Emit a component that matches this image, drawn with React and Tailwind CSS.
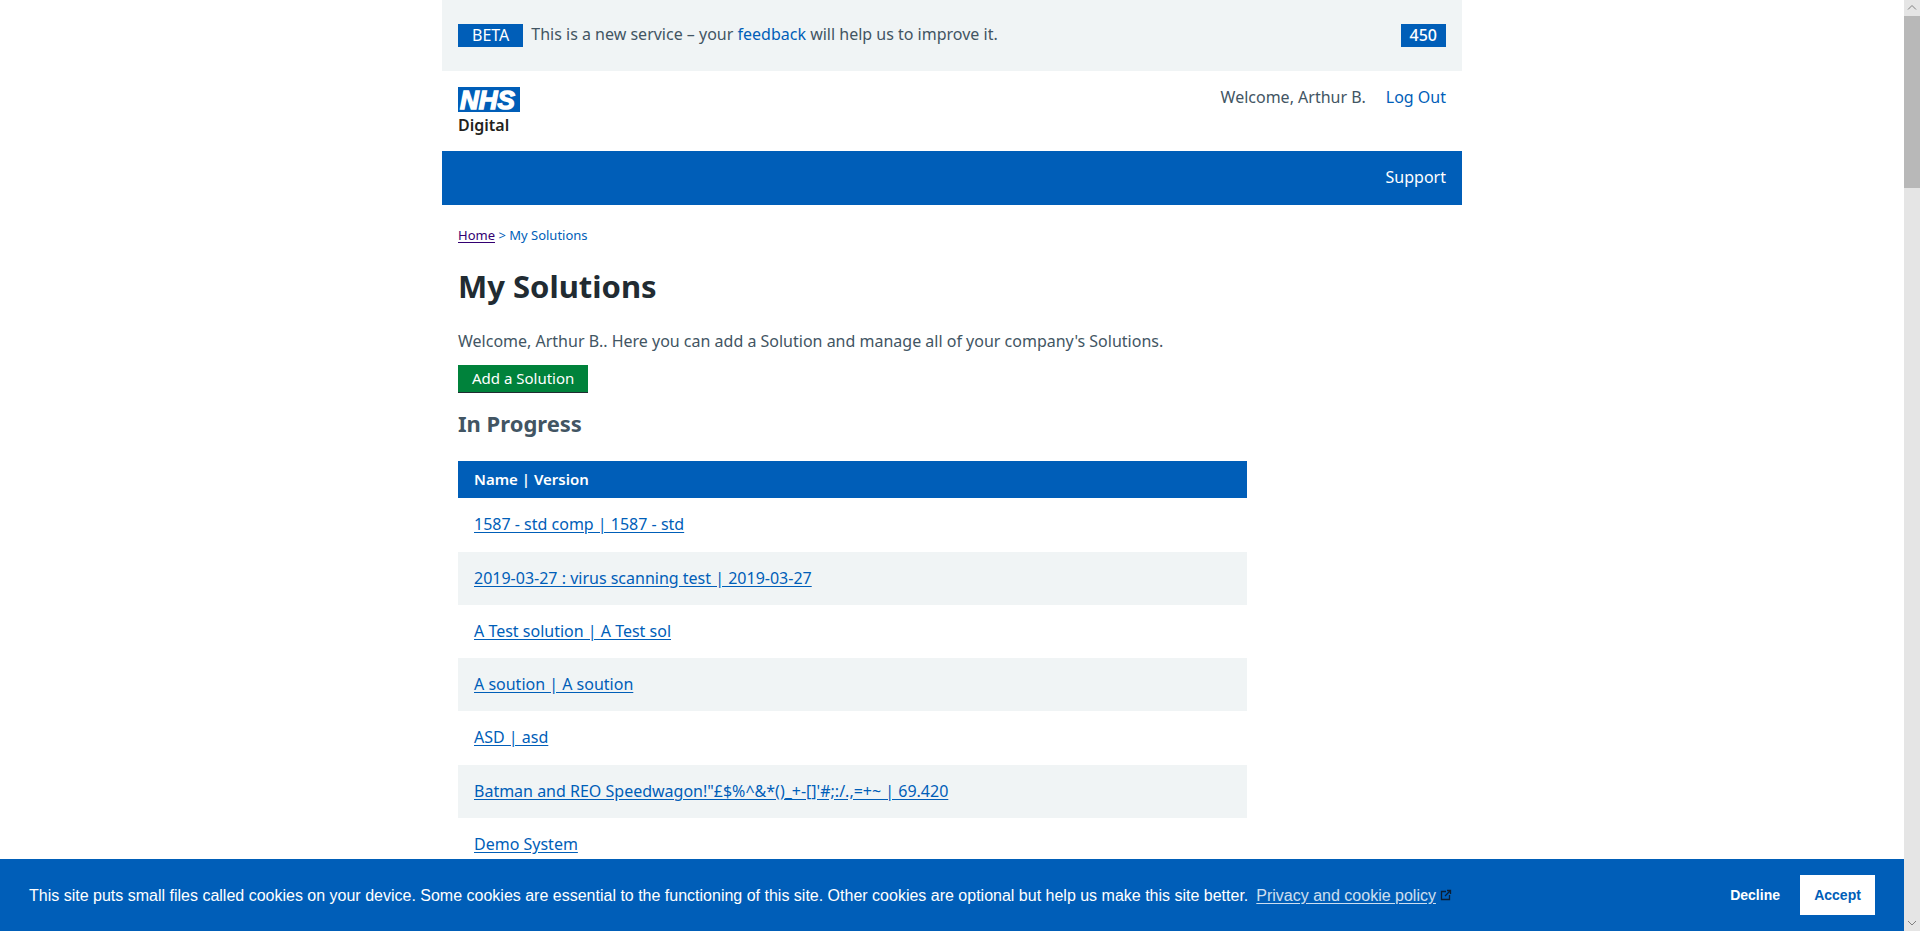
const solutions = [
  '1587 - std comp | 1587 - std',
  '2019-03-27 : virus scanning test | 2019-03-27',
  'A Test solution | A Test sol',
  'A soution | A soution',
  'ASD | asd',
  'Batman and REO Speedwagon!"£$%^&*()_+-[]\'#;:/.,=+~ | 69.420',
  'Demo System',
];

function Logo() {
  return (
    <svg width="72" height="56" viewBox="0 0 72 56" role="img" aria-label="NHS Digital">
      <rect width="62" height="25" fill="#005eb8" />
      <text x="2" y="22" fontFamily="Liberation Sans, sans-serif" fontSize="26" fontWeight="700" fontStyle="italic" fill="#fff" stroke="#fff" strokeWidth="1.4">NHS</text>
      <text x="0" y="44" fontFamily="Noto Sans, sans-serif" fontSize="16" fontWeight="600" fill="#231f20">Digital</text>
    </svg>
  );
}

function PhaseBanner() {
  return (
    <div className="flex items-start bg-[#f0f4f5] px-4 py-6">
      <strong className="bg-[#005eb8] px-[14px] text-base leading-[23px] font-normal text-white">BETA</strong>
      <p className="ml-2 text-base leading-5">
        This is a new service – your <a href="#feedback" className="text-[#005eb8]">feedback</a> will help us to improve it.
      </p>
      <span className="ml-auto bg-[#005eb8] px-[9px] text-base leading-[23px] font-medium text-white">450</span>
    </div>
  );
}

function Header() {
  return (
    <header>
      <div className="flex h-20 items-start justify-between px-4 pt-4">
        <a href="#home"><Logo /></a>
        <div className="flex gap-5 text-base leading-5">
          <span>Welcome, Arthur B.</span>
          <a href="#logout" className="text-[#005eb8]">Log Out</a>
        </div>
      </div>
      <nav className="flex h-[54px] items-center justify-end bg-[#005eb8] px-4 text-base text-white">
        <a href="#support" className="pb-0.5">Support</a>
      </nav>
    </header>
  );
}

function SolutionsTable() {
  return (
    <table className="mt-[22px] w-[789px] max-w-full border-collapse text-left text-base">
      <thead>
        <tr className="h-[37px] bg-[#005eb8] text-white">
          <th scope="col" className="px-4 text-[15px] font-semibold">Name | Version</th>
        </tr>
      </thead>
      <tbody>
        {solutions.map((name) => (
          <tr key={name} className="h-[53px] even:bg-[#f0f4f5] nth-[4n+1]:h-[54px]">
            <td className="px-4 pb-0.5">
              <a href="#solution" className="text-[#005eb8] underline underline-offset-2">{name}</a>
            </td>
          </tr>
        ))}
      </tbody>
    </table>
  );
}

function CookieBar() {
  return (
    <section aria-label="Cookies" className="absolute inset-x-0 bottom-0 flex h-[72px] items-center bg-[#005eb8] px-[29px] font-['Liberation_Sans',Arial,sans-serif] text-base text-white">
      <p className="pt-0.5">This site puts small files called cookies on your device. Some cookies are essential to the functioning of this site. Other cookies are optional but help us make this site better.</p>
      <a href="#privacy" className="ml-2 pt-0.5 underline underline-offset-2 opacity-80">Privacy and cookie policy</a>
      <svg className="ml-1" width="12" height="12" viewBox="0 0 12 12" fill="none" stroke="#0b1e33" aria-hidden="true">
        <path d="M6 2.5H1.5v8h8V6M7 1.5h3.5V5M10.5 1.5 5 7" strokeWidth="1.3" />
      </svg>
      <div className="ml-auto flex items-center gap-5 text-sm font-bold">
        <button type="button">Decline</button>
        <button type="button" className="h-10 w-[75px] bg-white text-[#005eb8]">Accept</button>
      </div>
    </section>
  );
}

function ScrollTrack() {
  return (
    <div aria-hidden="true" className="flex w-4 shrink-0 flex-col items-center bg-[#e5e5e5]">
      <svg width="16" height="16" viewBox="0 0 16 16" fill="none" stroke="#808080"><path d="m4 9.500 4-4 4 4" /></svg>
      <div className="h-[172px] w-full bg-[#b8b8b8]" />
      <svg className="mt-auto" width="16" height="16" viewBox="0 0 16 16" fill="none" stroke="#808080"><path d="m4 6 4 4 4-4" /></svg>
    </div>
  );
}

export default function App() {
  return (
    <div className="flex h-screen overflow-hidden bg-white font-['Noto_Sans','Open_Sans',sans-serif] text-[#425563]">
      <div className="relative min-w-0 flex-1 overflow-hidden">
        <div className="mx-auto max-w-[1020px]">
          <PhaseBanner />
          <Header />
          <main className="px-4">
            <nav aria-label="Breadcrumb" className="mt-5 text-[13px] leading-5 text-[#005eb8]">
              <a href="#home" className="text-[#330072] underline underline-offset-2">Home</a> &gt; My Solutions
            </nav>
            <h1 className="mt-[22px] text-[31px] leading-[38px] font-bold text-[#212b32]">My Solutions</h1>
            <p className="mt-6 text-base leading-6">Welcome, Arthur B.. Here you can add a Solution and manage all of your company's Solutions.</p>
            <button type="button" className="mt-3 block h-7 border-b border-[#212b32] bg-[#00823b] px-[14px] pb-0.5 text-[15px] leading-5 text-white">Add a Solution</button>
            <h2 className="mt-[14px] text-[22px] leading-8 font-bold">In Progress</h2>
            <SolutionsTable />
          </main>
        </div>
        <CookieBar />
      </div>
      <ScrollTrack />
    </div>
  );
}
